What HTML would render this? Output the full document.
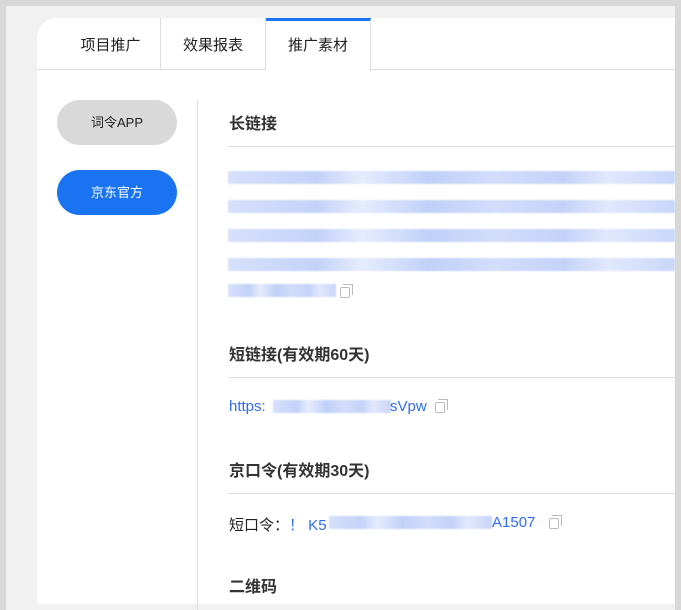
<!DOCTYPE html><html><head><meta charset="utf-8"><style>
*{margin:0;padding:0;box-sizing:border-box}
body{width:681px;height:610px;background:#f1f1f1;position:relative;overflow:hidden;font-family:"Liberation Sans","Noto Sans CJK SC",sans-serif;color:#222}
.frame{position:absolute;left:0;top:0;width:681px;height:610px;border:6px solid #d8d8d8;border-bottom:none;border-left-width:6px}
.card{position:absolute;left:37px;top:18px;width:638px;height:586px;background:#fff;border-top-left-radius:20px}
.tabs{position:absolute;left:0;top:0;width:638px;height:52px;border-bottom:1px solid #ddd}
.tab{position:absolute;top:0;height:52px;font-size:15px;line-height:56px;text-align:center;border-right:1px solid #ddd}
.btn{position:absolute;left:20px;width:120px;height:45px;border-radius:23px;font-size:13px;line-height:45px;text-align:center}
.vd{position:absolute;left:160px;top:82px;width:1px;height:510px;background:#ddd}
h3{position:absolute;left:192px;font-size:16px;font-weight:bold;color:#333}
.ln{position:absolute;left:191px;width:447px;height:1px;background:#ddd}
.bl{position:absolute;height:13px;background:linear-gradient(90deg,#d6e0fb,#c3d2f8 20%,#e6ecfd 30%,#bfd0f7 45%,#d2ddfa 60%,#c3d2f8 75%,#e1e8fc 85%,#c8d6f9);filter:blur(0.8px)}
.cp{position:absolute;width:10px;height:11px;border:1px solid #bbb;border-radius:2px}
.cp:before{content:"";position:absolute;left:2px;top:-4px;width:9px;height:10px;border-top:1px solid #bbb;border-right:1px solid #bbb}
.t{position:absolute;font-size:15px}
</style></head><body>
<div class="frame"></div>
<div class="card">
<div class="tabs">
<div class="tab" style="left:0;width:124px;padding-left:24px">项目推广</div>
<div class="tab" style="left:124px;width:105px">效果报表</div>
<div class="tab" style="left:229px;width:105px;border-top:3px solid #1a73f0;height:53px;background:#fff;line-height:50px">推广素材</div>
</div>
<div class="btn" style="top:82px;background:#d9d9d9;color:#222">词令APP</div>
<div class="btn" style="top:152px;background:#1a73f0;color:#fff">京东官方</div>
<div class="vd"></div>
<h3 style="top:92px">长链接</h3>
<div class="ln" style="top:128px"></div>
<div class="bl" style="left:191px;top:153px;width:447px"></div>
<div class="bl" style="left:191px;top:182px;width:447px"></div>
<div class="bl" style="left:191px;top:211px;width:447px"></div>
<div class="bl" style="left:191px;top:240px;width:447px"></div>
<div class="bl" style="left:191px;top:266px;width:108px"></div>
<div class="cp" style="left:303px;top:269px"></div>
<h3 style="top:323px">短链接(有效期60天)</h3>
<div class="ln" style="top:359px"></div>
<div class="t" style="left:192px;top:380px;color:#2f6cf0">https:</div>
<div class="bl" style="left:236px;top:382px;width:118px"></div>
<div class="t" style="left:353px;top:380px;color:#2f6cf0">sVpw</div>
<div class="cp" style="left:398px;top:384px"></div>
<h3 style="top:439px">京口令(有效期30天)</h3>
<div class="ln" style="top:475px"></div>
<div class="t" style="left:192px;top:496px">短口令：<span style="color:#2f6cf0">！ K5</span></div>
<div class="bl" style="left:292px;top:498px;width:163px"></div>
<div class="t" style="left:455px;top:496px;color:#2f6cf0">A1507</div>
<div class="cp" style="left:512px;top:500px"></div>
<h3 style="top:555px">二维码</h3>
</div>
</body></html>
